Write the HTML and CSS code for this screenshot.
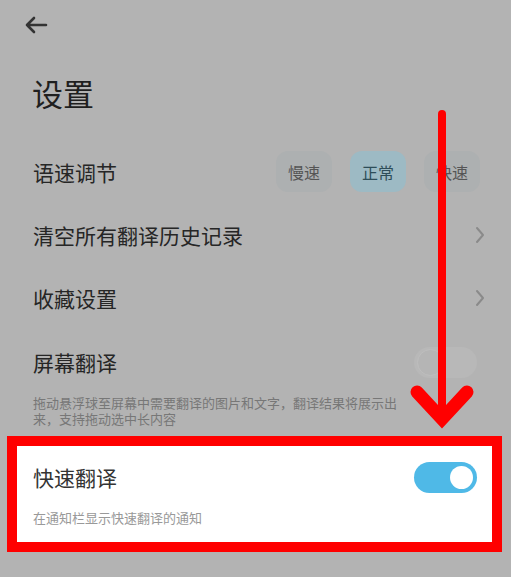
FILE: index.html
```html
<!DOCTYPE html>
<html>

<head>
    <title>设置</title>
    <link rel="stylesheet" href="styles.css">
</head>

<body>
    <div class="header">
        <svg class="back" width="24" height="18" viewBox="0 0 24 18">
            <path d="M22 9H3M10 2L3 9L10 16" fill="none" stroke="#333" stroke-width="2.6" stroke-linecap="round" stroke-linejoin="round" />
        </svg>
    </div>

    <h1 class="title">设置</h1>

    <div class="row">
        <div class="label">语速调节</div>
        <div class="speeds">
            <div class="speed">慢速</div>
            <div class="speed active">正常</div>
            <div class="speed">快速</div>
        </div>
    </div>

    <div class="row">
        <div class="label">清空所有翻译历史记录</div>
        <svg class="chevron" width="10" height="18" viewBox="0 0 10 18">
            <path d="M2 2L8 9L2 16" fill="none" stroke="#8a8a8a" stroke-width="2" stroke-linecap="round" stroke-linejoin="round" />
        </svg>
    </div>

    <div class="row">
        <div class="label">收藏设置</div>
        <svg class="chevron" width="10" height="18" viewBox="0 0 10 18">
            <path d="M2 2L8 9L2 16" fill="none" stroke="#8a8a8a" stroke-width="2" stroke-linecap="round" stroke-linejoin="round" />
        </svg>
    </div>

    <div class="row switch-row">
        <div class="label">屏幕翻译</div>
        <div class="toggle off"><span class="knob"></span></div>
    </div>
    <div class="desc">拖动悬浮球至屏幕中需要翻译的图片和文字，翻译结果将展示出<br />来，支持拖动选中长内容</div>

    <!-- highlighted item -->
    <div class="highlight">
        <div class="row hl-row">
            <div class="label">快速翻译</div>
            <div class="toggle on"><span class="knob"></span></div>
        </div>
        <div class="desc hl-desc">在通知栏显示快速翻译的通知</div>
    </div>

    <!-- annotation arrow -->
    <svg class="pointer" width="511" height="577" viewBox="0 0 511 577">
        <line x1="442" y1="114" x2="442" y2="414" stroke="#ff0000" stroke-width="8" stroke-linecap="round" />
        <polyline points="417,392 442,419 467,392" fill="none" stroke="#ff0000" stroke-width="13" stroke-linecap="round" stroke-linejoin="miter" />
    </svg>
</body>

</html>
```

FILE: styles.css
```css
/* settings screen, dimmed, with one row called out */

body {
    margin: 0;
    background-color: #b3b3b3;
    font-family: "Noto Sans CJK SC", "Noto Sans", sans-serif;
    color: #262626;
    position: relative;
    width: 511px;
    height: 577px;
    overflow: hidden;
}

.header {
    height: 50px;
    padding: 16px 0 0 24px;
    box-sizing: border-box;
}

.back {
    display: block;
}

.title {
    margin: 0;
    padding: 23px 0 0 32px;
    height: 90px;
    box-sizing: border-box;
    font-size: 31px;
    line-height: 40px;
    font-weight: normal;
    color: #1f1f1f;
}

.row {
    display: flex;
    align-items: center;
    justify-content: space-between;
    height: 63px;
    padding: 0 26px 0 33px;
}

.label {
    font-size: 21px;
    line-height: 28px;
}

.speeds {
    display: flex;
    gap: 18px;
    margin-right: 5px;
}

.speed {
    width: 56px;
    height: 41px;
    border-radius: 12px;
    background-color: #adb0b1;
    color: #555;
    font-size: 16px;
    display: flex;
    align-items: center;
    justify-content: center;
}

.speed.active {
    background-color: #9dbac4;
    color: #2e4d58;
}

.switch-row {
    height: 66px;
    padding-right: 34px;
}

.toggle {
    width: 63px;
    height: 31px;
    border-radius: 16px;
    position: relative;
}

.toggle .knob {
    position: absolute;
    top: 4px;
    width: 23px;
    height: 23px;
    border-radius: 50%;
}

.toggle.off {
    background-color: #b8b8b8;
}

.toggle.off .knob {
    left: 3px;
    top: 2px;
    width: 25px;
    height: 25px;
    border: 1px solid #bebebe;
    background-color: #b5b5b5;
}

.toggle.on {
    background-color: #4fb9e7;
}

.toggle.on .knob {
    right: 4px;
    background-color: #fff;
}

.desc {
    padding: 0 60px 0 33px;
    font-size: 13px;
    line-height: 16px;
    color: #777;
}

.highlight {
    margin: 9px 9px 0 7px;
    border: 10px solid #ff0000;
    background-color: #fff;
    padding-bottom: 16px;
}

.hl-row {
    height: 62px;
    padding: 0 15px 0 16px;
}

.hl-row .label {
    color: #333;
}

.hl-desc {
    margin-top: 2px;
    padding-left: 16px;
    color: #999;
}

.pointer {
    position: absolute;
    left: 0;
    top: 0;
    pointer-events: none;
}
```
